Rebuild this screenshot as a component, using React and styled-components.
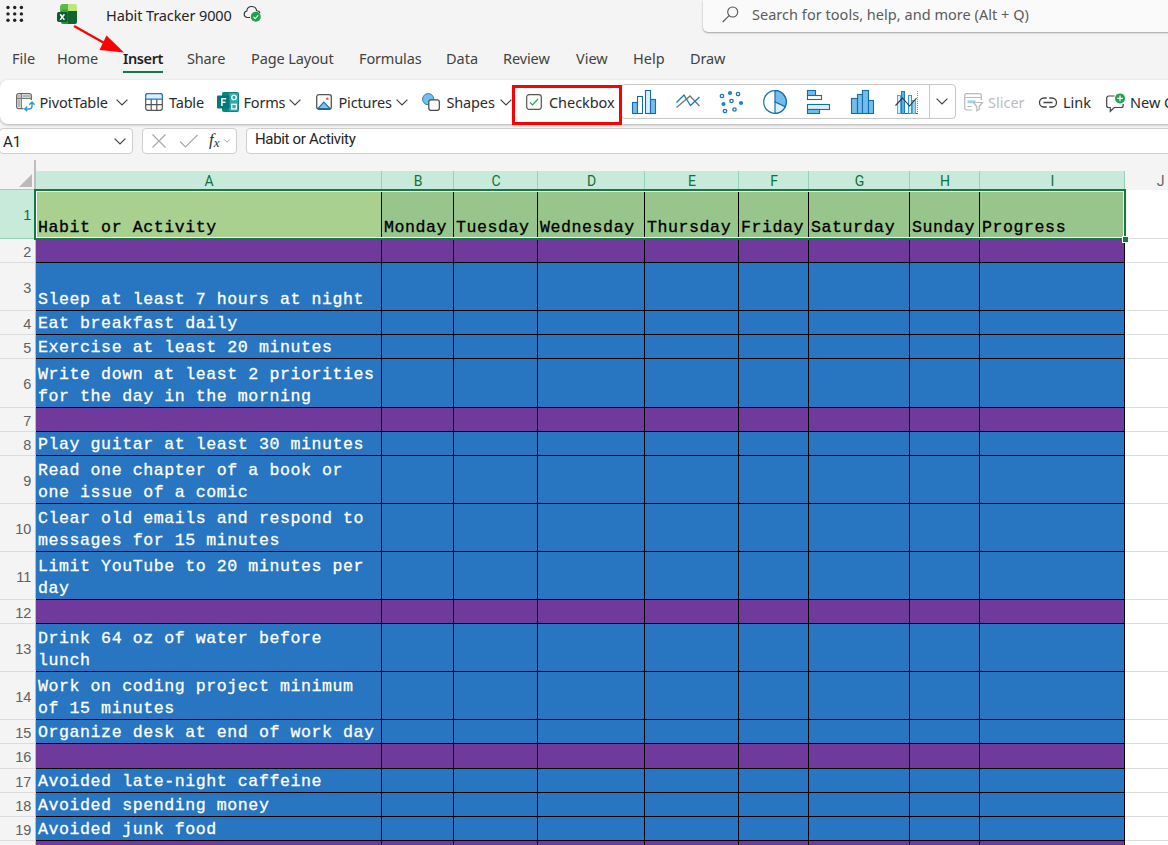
import React from "react";
import styled, { createGlobalStyle } from "styled-components";

const Global = createGlobalStyle`
  * { box-sizing: border-box; }
  body { margin: 0; background: #f4f4f4; overflow: hidden; }
  svg { display: block; flex: none; overflow: visible; }
`;

const ui = `"Noto Sans", "Open Sans", sans-serif`;

const Page = styled.div`
  position: relative;
  width: 1168px;
  height: 845px;
  overflow: hidden;
  background: #f4f4f4;
  color: #3b3b3b;
  font-family: ${ui};
  font-size: 14.5px;
`;

const TitleBar = styled.header`
  display: flex;
  align-items: flex-start;
  height: 40px;
  padding-left: 6px;
`;
const IconSlot = styled.div`
  flex: none;
  width: ${(p) => p.$w}px;
  padding-top: ${(p) => p.$top || 0}px;
`;
const FileName = styled.div`
  width: 137px;
  line-height: 30px;
  color: #242424;
  white-space: nowrap;
  letter-spacing: ${(p) => p.$ls}px;
`;
const Search = styled.div`
  display: flex;
  align-items: center;
  flex: none;
  width: 480px;
  height: 32px;
  margin-left: auto;
  margin-right: -15px;
  padding: 0 0 4px 19px;
  gap: 13px;
  background: #fafafa;
  border-radius: 0 0 0 5px;
  box-shadow: 0 1px 2px rgba(0, 0, 0, 0.35);
  color: #5c5c5c;
  white-space: nowrap;
  letter-spacing: ${(p) => p.$ls}px;
`;

const Tabs = styled.nav`
  display: flex;
  height: 40px;
  padding: 5px 0 0 12px;
`;
const TabCell = styled.div`
  flex: none;
  width: ${(p) => p.$w}px;
`;
const TabLabel = styled.span`
  display: inline-block;
  height: 28px;
  line-height: 27px;
  white-space: nowrap;
  letter-spacing: ${(p) => p.$ls || 0}px;
  color: ${(p) => (p.$active ? "#1f1f1f" : "#424242")};
  font-weight: ${(p) => (p.$active ? 600 : 400)};
  border-bottom: 2px solid ${(p) => (p.$active ? "#107c41" : "transparent")};
`;

const Ribbon = styled.div`
  display: flex;
  align-items: center;
  height: 44px;
  width: 1190px;
  background: #fff;
  border-radius: 8px;
  box-shadow: 0 1px 3px rgba(0, 0, 0, 0.28);
`;
const Command = styled.div`
  display: flex;
  align-items: center;
  flex: none;
  width: ${(p) => p.$w}px;
  height: 44px;
  margin-left: ${(p) => p.$ml || 0}px;
  color: ${(p) => (p.$off ? "#bdbdbd" : "#2b2b2b")};
`;
const CommandIcon = styled.div`
  flex: none;
  width: ${(p) => p.$w}px;
`;
const CommandLabel = styled.span`
  flex: none;
  width: ${(p) => p.$w}px;
  white-space: nowrap;
  letter-spacing: ${(p) => p.$ls || 0}px;
`;
const Gallery = styled.div`
  display: flex;
  align-items: center;
  flex: none;
  width: 335px;
  height: 35px;
  margin: 0 8px 2px 0;
  padding-left: 10px;
  border: 1px solid #c8c8c8;
  border-radius: 4px;
`;
const ChartSlot = styled.div`
  flex: none;
  width: ${(p) => p.$w || 44}px;
  padding-top: 2px;
`;
const GalleryMore = styled.div`
  display: flex;
  align-items: center;
  justify-content: center;
  height: 33px;
  flex: 1;
  padding-right: 1px;
  border-left: 1px solid #c8c8c8;
`;

const FormulaBar = styled.div`
  display: flex;
  height: 35px;
  padding-top: 4px;
  font-family: Roboto, sans-serif;
  font-size: 15px;
  color: #242424;
`;
const Field = styled.div`
  display: flex;
  flex: none;
  align-items: center;
  width: ${(p) => p.$w}px;
  height: 26px;
  margin-left: ${(p) => p.$ml || 0}px;
  padding: ${(p) => p.$pad};
  background: #fff;
  border: 1px solid #cecece;
  border-radius: 4px;
  white-space: nowrap;
`;
const NameText = styled.span`
  flex: 1;
  padding-top: 1px;
`;
const Fx = styled.span`
  margin: -3px 4px 0 10px;
  font: italic 17px/20px "Liberation Serif", serif;
  color: #333;
  sub { font-size: 13px; line-height: 0; vertical-align: -2px; }
`;
const FormulaText = styled.span`
  letter-spacing: -0.33px;
`;

const Sheet = styled.main`
  position: relative;
  display: grid;
  grid-template-columns: 36px 346px 72px 84px 107px 94px 70px 101px 70px 145px 71px;
  grid-template-rows: 30px 49px 24px 48px 24px 24px 49px 24px 24px 48px 48px 48px 24px 48px 48px 24px 25px 24px 24px 24px 5px;
  margin-top: 1px;
  font-family: "Liberation Sans", Arial, sans-serif;
`;
const Corner = styled.div`
  display: flex;
  align-items: flex-end;
  justify-content: flex-end;
  padding: 0 2px 2px 0;
  border-right: 2px solid #bdbdbd;
  border-bottom: 2px solid #bdbdbd;
  height: 31px;
  width: 36px;
`;
const ColHead = styled.div`
  display: flex;
  justify-content: center;
  align-items: center;
  margin-top: 11px;
  padding-left: 1px;
  font-family: Roboto, sans-serif;
  font-size: 14px;
  line-height: 18px;
  background: ${(p) => (p.$selected ? "#c8eadb" : "#f4f4f4")};
  color: ${(p) => (p.$selected ? "#0e703a" : "#616161")};
  border-right: 1px solid ${(p) => (p.$selected ? "#93d2b5" : "transparent")};
`;
const RowHead = styled.div`
  display: flex;
  align-items: center;
  justify-content: flex-end;
  padding: 2px 4px 0 0;
  font-size: 14.5px;
  line-height: 16px;
  letter-spacing: -0.2px;
  background: ${(p) => (p.$selected ? "#c8eadb" : "#f4f4f4")};
  color: ${(p) => (p.$selected ? "#0e703a" : "#616161")};
  border-right: 1px solid #bdbdbd;
  border-bottom: 1px solid ${(p) => (p.$selected ? "#93d2b5" : "#dcdcdc")};
`;
const fills = { head: "#98c58b", first: "#a9d08e", band: "#6f3a9b", task: "#2876c1", blank: "#fff" };
const Cell = styled.div`
  display: flex;
  align-items: flex-end;
  min-width: 0;
  padding-left: 2px;
  background: ${(p) => fills[p.$fill]};
  color: ${(p) => (p.$fill === "task" ? "#fff" : "#000")};
  border-right: 1px solid ${(p) => (p.$fill === "blank" ? "#fff" : "#000")};
  border-bottom: 1px solid ${(p) => (p.$fill === "blank" ? "#dcdcdc" : "#000")};
`;
const CellText = styled.span`
  margin-bottom: -1px;
  font-family: "Courier New", "Liberation Mono", monospace;
  font-size: 16.6px;
  letter-spacing: 0.56px;
  line-height: 22px;
  white-space: pre;
  -webkit-text-stroke: 0.3px currentColor;
`;
const Selection = styled.div`
  position: absolute;
  left: 34px;
  top: 29px;
  width: 1092px;
  height: 51px;
  border: 2px solid #107c41;
  box-shadow: inset 0 0 0 1px #fff;
`;
const Handle = styled.div`
  position: absolute;
  right: -5px;
  bottom: -5px;
  width: 7px;
  height: 7px;
  background: #107c41;
  border: 1px solid #fff;
`;
const Highlight = styled.div`
  position: absolute;
  left: 512px;
  top: 85px;
  width: 110px;
  height: 40px;
  border: 3px solid #f00;
`;
const Arrow = styled.svg`
  position: absolute;
  left: 70px;
  top: 20px;
`;

const Chevron = ({ w = 12, color = "#444", sw = 1.2 }) => (
  <svg width={w} height={w / 2 + 1} viewBox="0 0 12 7" fill="none" stroke={color} strokeWidth={sw}>
    <path d="M.6.6 6 6 11.4.6" />
  </svg>
);

const Launcher = () => (
  <svg width="18" height="18" fill="#222">
    {[0, 1, 2].map((r) => [0, 1, 2].map((c) => <circle key={`${r}${c}`} cx={2 + c * 6.7} cy={1.500 + r * 6.4} r="1.7" />))}
  </svg>
);

const ExcelLogo = () => (
  <svg width="20" height="20" viewBox="0 0 20 20">
    <path d="M6 0h5v8H3V3a3 3 0 0 1 3-3z" fill="#5fb83f" />
    <path d="M11 0h7a2 2 0 0 1 2 2v5h-9z" fill="#bce87b" />
    <path d="M4 7h7v13H6a2 2 0 0 1-2-2z" fill="#1f9048" />
    <path d="M11 7h9v11a2 2 0 0 1-2 2h-7z" fill="#12652e" />
    <path d="M5 8h6V5.500H5z" fill="#3aa14b" />
    <rect x="0" y="8" width="10.500" height="10" rx="1.800" fill="#0b5c35" />
    <path d="m3.200 10.300 4.200 5.600M7.400 10.300l-4.200 5.600" stroke="#fff" strokeWidth="1.500" />
  </svg>
);

const CloudSaved = () => (
  <svg width="19" height="18" viewBox="0 0 19 18" fill="none">
    <path d="M7 12.500H4A3.300 3.300 0 0 1 3.800 6 5 5 0 0 1 13.700 5.700 3.200 3.200 0 0 1 17 8" stroke="#333" strokeWidth="1.100" />
    <circle cx="12.800" cy="11.800" r="5" fill="#21a14d" />
    <path d="m10.500 11.900 1.700 1.700 3-3.200" stroke="#fff" strokeWidth="1.200" />
  </svg>
);

const SearchIcon = () => (
  <svg width="17" height="17" viewBox="0 0 17 17" fill="none" stroke="#555" strokeWidth="1.100">
    <circle cx="10.700" cy="6" r="5" />
    <path d="M7.100 9.700.7 16" />
  </svg>
);

const PivotIcon = () => (
  <svg width="18" height="18" viewBox="0 0 18 18" fill="none">
    <rect x=".7" y=".7" width="14.600" height="15" rx="2" fill="#fff" stroke="#666" strokeWidth="1.300" />
    <path d="M1 5.300h14M5.300 1v14" stroke="#777" strokeWidth="1.200" />
    <path d="M2 2h2.500v2.500H2zM6.300 2h8v2.300h-8zM2 6.300h2.300v8H2z" fill="#b5b5b5" />
    <path d="M7.500 18v-7h3l2-4h5.500v11z" fill="#fff" />
    <path d="M9 16h4a3 3 0 0 0 3-3V9.500M13.200 11.800 16 9l2.500 2.800M11.300 13.500 8.700 16l2.600 2.300" stroke="#2b9bd6" strokeWidth="1.400" />
  </svg>
);

const TableIcon = () => (
  <svg width="18" height="18" viewBox="0 0 18 18" fill="none">
    <rect x=".7" y=".7" width="16.600" height="16.600" rx="2" fill="#fff" stroke="#555" strokeWidth="1.200" />
    <path d="M.7 6h16.600M.7 11.700h16.600M6.200 6v11M11.800 6v11" stroke="#555" strokeWidth="1.200" />
    <path d="M.7 6V2.700a2 2 0 0 1 2-2h12.600a2 2 0 0 1 2 2V6z" fill="#d9effb" stroke="#1e7fc4" strokeWidth="1.200" />
  </svg>
);

const FormsIcon = () => (
  <svg width="22" height="20" viewBox="0 0 22 20" fill="none">
    <rect x="5.500" y=".5" width="16" height="19" rx="1" fill="#0b8484" stroke="#0b8484" />
    <rect x="12" y="1" width="9" height="18" fill="#2fa9a6" />
    <circle cx="17" cy="5.400" r="2.300" stroke="#fff" strokeWidth="1.300" />
    <rect x="14.700" y="12.300" width="4.600" height="4.600" stroke="#fff" strokeWidth="1.300" />
    <rect x="0" y="3.500" width="12.500" height="13" rx="1" fill="#03787c" />
    <path d="M4.900 14V6.700h4.200M4.900 10.200h3.700" stroke="#fff" strokeWidth="1.500" />
  </svg>
);

const PictureIcon = () => (
  <svg width="16" height="16" viewBox="0 0 16 16" fill="none">
    <path d="M2 14.500 7.800 8.200l6.200 6.300z" fill="#7cc4ef" stroke="#1b75b8" strokeWidth="1.200" />
    <rect x=".7" y=".7" width="14.600" height="14.600" rx="2.200" stroke="#555" strokeWidth="1.300" />
    <circle cx="11.300" cy="4.800" r="1.300" fill="#e8672c" />
  </svg>
);

const ShapesIcon = () => (
  <svg width="18" height="18" viewBox="0 0 18 18">
    <circle cx="6.200" cy="6.200" r="5.600" fill="#75bdea" stroke="#2785c7" strokeWidth="1" />
    <rect x="6.800" y="6.800" width="10.500" height="10.500" rx="2" fill="#fff" stroke="#444" strokeWidth="1.200" />
  </svg>
);

const CheckboxIcon = () => (
  <svg width="16" height="16" viewBox="0 0 16 16" fill="none">
    <rect x=".7" y=".7" width="14.600" height="14.600" rx="2.500" stroke="#555" strokeWidth="1.200" />
    <path d="m3.800 8.300 2.700 2.700 5.500-6" stroke="#23a455" strokeWidth="1.200" />
  </svg>
);

const Bar = ({ x, y, w, h, f = "#74bdea" }) => (
  <rect x={x + 0.5} y={y + 0.5} width={w - 1} height={h - 1} fill={f} stroke="#136cad" strokeWidth="1.100" />
);

const ColumnChart = () => (
  <svg width="24" height="25">
    <Bar x={0} y={12} w={6} h={12} />
    <Bar x={5} y={6} w={6} h={18} f="#fff" />
    <Bar x={13} y={0} w={6} h={24} f="#d9f0fc" />
    <Bar x={18} y={9} w={6} h={15} />
  </svg>
);
const LineChart = () => (
  <svg width="24" height="25" fill="none" strokeWidth="1.300">
    <path d="M.5 17.500 14 6l9.500 10" stroke="#777" />
    <path d="M.5 12.500 8 5l6.500 10.500 9-8.500" stroke="#1c78b8" />
  </svg>
);
const ScatterChart = () => (
  <svg width="24" height="25" strokeWidth="1.300">
    {[[10, 3], [3.500, 14], [21, 13]].map(([x, y]) => <circle key={x} cx={x} cy={y} r="2.100" fill="#1686c8" />)}
    {[[2, 6], [18, 4], [11.500, 11], [5, 21], [14.500, 19.500]].map(([x, y]) => <circle key={x} cx={x} cy={y} r="1.700" fill="#fff" stroke="#1b76b5" />)}
  </svg>
);
const PieChart = () => (
  <svg width="24" height="25" stroke="#1570b0" strokeWidth="1.200">
    <circle cx="12" cy="12" r="11.300" fill="#fff" />
    <path d="M12 12V.7a11.300 11.300 0 0 1 10.200 16z" fill="#74bdea" />
    <path d="M12 12l10.200 4.800A11.300 11.300 0 0 1 12 23.300z" fill="#d9f0fc" />
  </svg>
);
const BarChart = () => (
  <svg width="24" height="25">
    <Bar x={0} y={0} w={9} h={6} />
    <Bar x={0} y={5} w={15} h={5} f="#fff" />
    <Bar x={0} y={14} w={23} h={6} f="#d9f0fc" />
    <Bar x={0} y={19} w={13} h={5} />
  </svg>
);
const Histogram = () => (
  <svg width="24" height="25">
    <Bar x={0} y={8} w={7} h={16} />
    <Bar x={6} y={4} w={6} h={20} />
    <Bar x={11} y={0} w={7} h={24} />
    <Bar x={17} y={10} w={6} h={14} />
  </svg>
);
const ComboChart = () => (
  <svg width="24" height="25" fill="none">
    <path d="M2 23.500h21" stroke="#136cad" />
    <path d="M22.500 1v22" stroke="#4c9dd0" strokeDasharray="1 1" />
    <rect x="2.500" y="5.500" width="3" height="18" fill="#d9f0fc" stroke="#5aaad8" />
    <rect x="6.500" y="1.500" width="3" height="22" fill="#4eb3ec" stroke="#1b7fc2" />
    <rect x="13.500" y="5.500" width="3" height="18" fill="#d9f0fc" stroke="#3a95cf" />
    <rect x="17.500" y="10.500" width="3" height="13" fill="#9cd2f2" stroke="#5aaad8" />
    <path d="m.5 15.500 7-7.500 7 8 7-8" stroke="#333" strokeWidth="1.100" />
  </svg>
);

const SlicerIcon = () => (
  <svg width="19" height="18" viewBox="0 0 19 18" fill="none" stroke="#b9b9b9" strokeWidth="1.200">
    <path d="M8 17H2.700a2 2 0 0 1-2-2V2.700a2 2 0 0 1 2-2h12.600a2 2 0 0 1 2 2V7M.7 4.500h16.600M3.500 13.500h4" />
    <rect x="3.500" y="7.300" width="8" height="3" fill="#9fd6ee" stroke="none" />
    <path d="M9.500 9.500h9l-3.300 4v3l-2.400 1.200v-4.200z" fill="#fff" />
  </svg>
);
const LinkIcon = () => (
  <svg width="18" height="11" viewBox="0 0 18 11" fill="none" stroke="#444" strokeWidth="1.300">
    <path d="M7.700 1H5a4.400 4.400 0 0 0 0 9h2.700M10.300 1H13a4.400 4.400 0 0 1 0 9h-2.700M4.500 5.500h9" />
  </svg>
);
const CommentIcon = () => (
  <svg width="19" height="19" viewBox="0 0 19 19" fill="none">
    <path d="M8.500 3H2.700a2 2 0 0 0-2 2v7.500a2 2 0 0 0 2 2h1.600V18.300l4-3.800h6.900a2 2 0 0 0 2-2V11" stroke="#444" strokeWidth="1.200" />
    <circle cx="14" cy="5.400" r="5" fill="#21a14d" />
    <path d="M14 2.500v5.800M11.100 5.400h5.800" stroke="#fff" strokeWidth="1.200" />
  </svg>
);

const tabs = [
  ["File", 45, 0], ["Home", 66, 0], ["Insert", 64, -0.4], ["Share", 64, -0.15], ["Page Layout", 108, -0.12],
  ["Formulas", 87, -0.15], ["Data", 57, 0], ["Review", 73, -0.1], ["View", 57, 0], ["Help", 57, 0], ["Draw", 60, -0.15],
];

const charts = [ColumnChart, LineChart, ScatterChart, PieChart, BarChart, Histogram, ComboChart];

const columns = ["A", "B", "C", "D", "E", "F", "G", "H", "I"];
const headings = ["Habit or Activity", "Monday", "Tuesday", "Wednesday", "Thursday", "Friday", "Saturday", "Sunday", "Progress"];

const rows = [
  null,
  "Sleep at least 7 hours at night",
  "Eat breakfast daily",
  "Exercise at least 20 minutes",
  "Write down at least 2 priorities\nfor the day in the morning",
  null,
  "Play guitar at least 30 minutes",
  "Read one chapter of a book or\none issue of a comic",
  "Clear old emails and respond to\nmessages for 15 minutes",
  "Limit YouTube to 20 minutes per\nday",
  null,
  "Drink 64 oz of water before\nlunch",
  "Work on coding project minimum\nof 15 minutes",
  "Organize desk at end of work day",
  null,
  "Avoided late-night caffeine",
  "Avoided spending money",
  "Avoided junk food",
];

function Row({ number, text }) {
  const fill = text === null ? "band" : "task";
  return (
    <>
      <RowHead>{number}</RowHead>
      {columns.map((c, i) => (
        <Cell key={c} $fill={fill}>
          {i === 0 && text ? <CellText>{text}</CellText> : null}
        </Cell>
      ))}
      <Cell $fill="blank" />
    </>
  );
}

export default function App() {
  return (
    <Page>
      <Global />
      <TitleBar>
        <IconSlot $w={51} $top={6}><Launcher /></IconSlot>
        <IconSlot $w={49} $top={4}><ExcelLogo /></IconSlot>
        <FileName $ls={-0.1}>Habit Tracker 9000</FileName>
        <IconSlot $w={20} $top={5}><CloudSaved /></IconSlot>
        <Search $ls={0.03}><SearchIcon />Search for tools, help, and more (Alt + Q)</Search>
      </TitleBar>
      <Tabs>
        {tabs.map(([t, w, ls]) => (
          <TabCell key={t} $w={w}><TabLabel $active={t === "Insert"} $ls={ls}>{t}</TabLabel></TabCell>
        ))}
      </Tabs>
      <Ribbon>
        <Command $ml={16} $w={129}><CommandIcon $w={23.5}><PivotIcon /></CommandIcon><CommandLabel $w={76.5} $ls={-0.15}>PivotTable</CommandLabel><Chevron /></Command>
        <Command $w={72}><CommandIcon $w={24}><TableIcon /></CommandIcon><CommandLabel $w={40} $ls={-0.2}>Table</CommandLabel></Command>
        <Command $w={99}><CommandIcon $w={26.5}><FormsIcon /></CommandIcon><CommandLabel $w={45.5} $ls={-0.2}>Forms</CommandLabel><Chevron /></Command>
        <Command $w={106}><CommandIcon $w={22.5}><PictureIcon /></CommandIcon><CommandLabel $w={57.5} $ls={-0.15}>Pictures</CommandLabel><Chevron /></Command>
        <Command $w={104}><CommandIcon $w={24.5}><ShapesIcon /></CommandIcon><CommandLabel $w={53.5} $ls={-0.15}>Shapes</CommandLabel><Chevron /></Command>
        <Command $w={95}><CommandIcon $w={23}><CheckboxIcon /></CommandIcon><CommandLabel $w={70} $ls={-0.05}>Checkbox</CommandLabel></Command>
        <Gallery>
          {charts.map((Chart, i) => <ChartSlot key={i} $w={i === 6 ? 34 : 43.8}><Chart /></ChartSlot>)}
          <GalleryMore><Chevron /></GalleryMore>
        </Gallery>
        <Command $w={75} $off><CommandIcon $w={24}><SlicerIcon /></CommandIcon><CommandLabel $w={40}>Slicer</CommandLabel></Command>
        <Command $w={67}><CommandIcon $w={24}><LinkIcon /></CommandIcon><CommandLabel $w={30}>Link</CommandLabel></Command>
        <Command $w={90}><CommandIcon $w={24}><CommentIcon /></CommandIcon><CommandLabel $w={60}>New C</CommandLabel></Command>
      </Ribbon>
      <FormulaBar>
        <Field $w={134} $ml={-1} $pad="0 6px 0 3px"><NameText>A1</NameText><Chevron /></Field>
        <Field $w={95} $ml={9} $pad="0 4px 0 9px">
          <svg width="47" height="14" fill="none" stroke="#aaa" strokeWidth="1.200"><path d="m.5.500 13 13M13.500.500l-13 13M28 7.500l5.500 5.500L45.500 1" /></svg>
          <Fx>f<sub>x</sub></Fx>
          <Chevron w={6} color="#999" sw={1.8} />
        </Field>
        <Field $w={940} $ml={9} $pad="0 0 4px 8px"><FormulaText>Habit or Activity</FormulaText></Field>
      </FormulaBar>
      <Sheet>
        <Corner><svg width="13" height="13" fill="#bababa"><path d="M13 0v13H0z" /></svg></Corner>
        {columns.map((c) => <ColHead key={c} $selected>{c}</ColHead>)}
        <ColHead>J</ColHead>
        <RowHead $selected>1</RowHead>
        {headings.map((h, i) => <Cell key={h} $fill={i ? "head" : "first"}><CellText>{h}</CellText></Cell>)}
        <Cell $fill="blank" />
        {rows.map((t, i) => <Row key={i} number={i + 2} text={t} />)}
        <Row number="" text={null} />
        <Selection><Handle /></Selection>
      </Sheet>
      <Highlight />
      <Arrow width="56" height="36">
        <path d="M4 6 36 24" stroke="#f00" strokeWidth="2.200" />
        <path d="M54 32.500 29.500 30 36.500 15.500z" fill="#f00" />
      </Arrow>
    </Page>
  );
}
